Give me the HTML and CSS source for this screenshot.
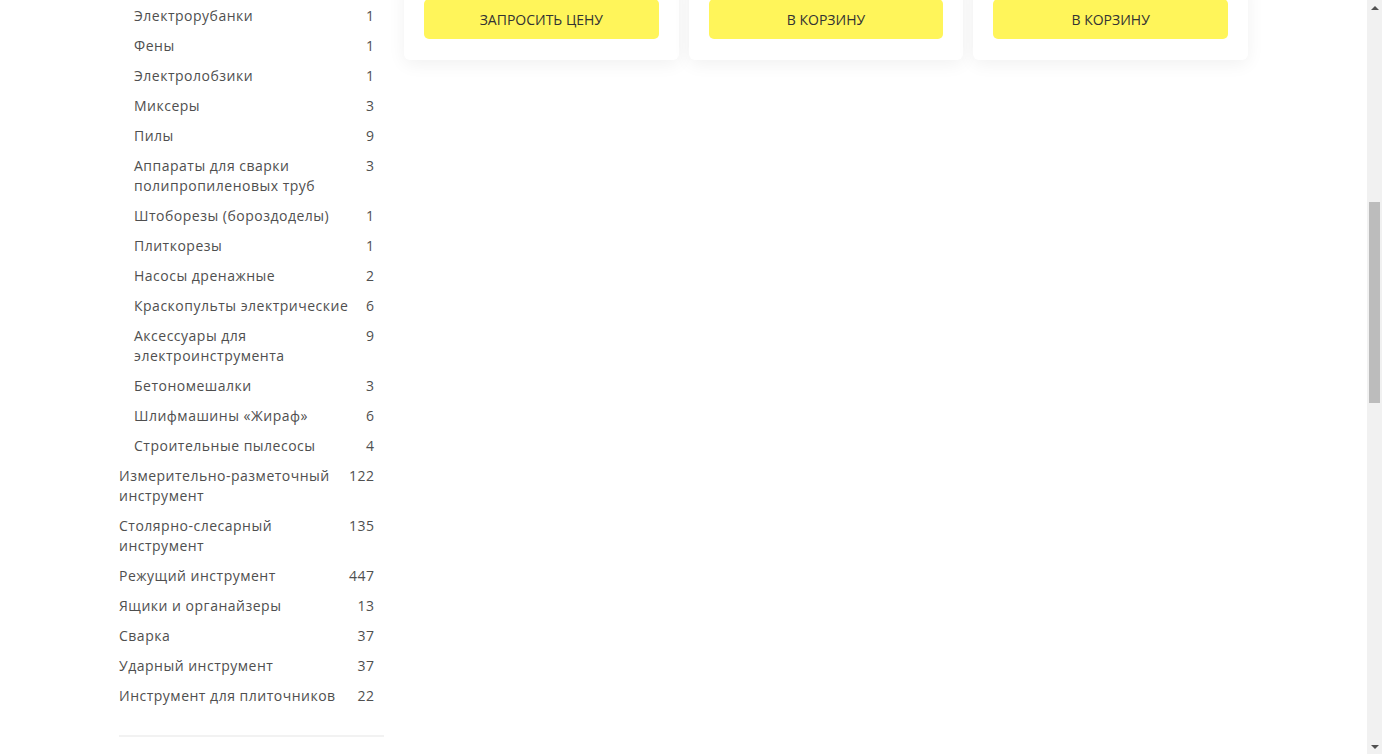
FILE: index.html
```html
<!DOCTYPE html>
<html lang="ru">
<head>
<meta charset="utf-8">
<title>Каталог</title>
<link rel="stylesheet" href="styles.css">
</head>
<body>
<div class="page">
  <div class="container">
    <aside class="sidebar">
      <ul class="cats">
        <li class="cat sub"><span class="name">Электрорубанки</span><span class="count">1</span></li>
        <li class="cat sub"><span class="name">Фены</span><span class="count">1</span></li>
        <li class="cat sub"><span class="name">Электролобзики</span><span class="count">1</span></li>
        <li class="cat sub"><span class="name">Миксеры</span><span class="count">3</span></li>
        <li class="cat sub"><span class="name">Пилы</span><span class="count">9</span></li>
        <li class="cat sub"><span class="name">Аппараты для сварки полипропиленовых труб</span><span class="count">3</span></li>
        <li class="cat sub"><span class="name">Штоборезы (бороздоделы)</span><span class="count">1</span></li>
        <li class="cat sub"><span class="name">Плиткорезы</span><span class="count">1</span></li>
        <li class="cat sub"><span class="name">Насосы дренажные</span><span class="count">2</span></li>
        <li class="cat sub"><span class="name">Краскопульты электрические</span><span class="count">6</span></li>
        <li class="cat sub"><span class="name">Аксессуары для электроинструмента</span><span class="count">9</span></li>
        <li class="cat sub"><span class="name">Бетономешалки</span><span class="count">3</span></li>
        <li class="cat sub"><span class="name">Шлифмашины «Жираф»</span><span class="count">6</span></li>
        <li class="cat sub"><span class="name">Строительные пылесосы</span><span class="count">4</span></li>
        <li class="cat"><span class="name">Измерительно-разметочный инструмент</span><span class="count">122</span></li>
        <li class="cat"><span class="name">Столярно-слесарный инструмент</span><span class="count">135</span></li>
        <li class="cat"><span class="name">Режущий инструмент</span><span class="count">447</span></li>
        <li class="cat"><span class="name">Ящики и органайзеры</span><span class="count">13</span></li>
        <li class="cat"><span class="name">Сварка</span><span class="count">37</span></li>
        <li class="cat"><span class="name">Ударный инструмент</span><span class="count">37</span></li>
        <li class="cat"><span class="name">Инструмент для плиточников</span><span class="count">22</span></li>
      </ul>
      <hr class="divider">
    </aside>
    <main class="products">
      <div class="card"><button class="btn">Запросить цену</button></div>
      <div class="card"><button class="btn">В корзину</button></div>
      <div class="card"><button class="btn">В корзину</button></div>
    </main>
  </div>
</div>
<div class="scrollbar">
  <div class="arrow up"></div>
  <div class="track"><div class="thumb"></div></div>
  <div class="arrow down"></div>
</div>
</body>
</html>
```

FILE: styles.css
```css
html, body {
  margin: 0;
  padding: 0;
  height: 100%;
  overflow: hidden;
}
body {
  display: flex;
  background: #fff;
  font-family: "Open Sans", "Liberation Sans", sans-serif;
  font-size: 14px;
  color: #4f4f4f;
}
.page {
  flex: 1;
  min-width: 0;
}
.container {
  width: 1129px;
  margin: 0 auto;
  display: flex;
  gap: 20px;
  align-items: flex-start;
}
.sidebar {
  width: 265px;
  flex: none;
  padding-top: 1px;
}
.cats {
  list-style: none;
  margin: 0;
  padding: 0 10px 0 0;
  letter-spacing: 0.5px;
}
.cat {
  display: flex;
  justify-content: space-between;
  gap: 12px;
  padding: 5px 0;
  line-height: 20px;
}
.cat.sub {
  padding-left: 15px;
}
.count {
  flex: none;
  text-align: right;
  margin-right: -0.5px;
}
.divider {
  border: 0;
  border-top: 2px solid #f2f2f2;
  margin: 24px 0 0;
}
.products {
  flex: 1;
  display: grid;
  grid-template-columns: repeat(3, 1fr);
  gap: 10px;
  margin-top: -21px;
}
.card {
  background: #fff;
  border-radius: 6px;
  padding: 20px 20px 21px;
  box-shadow: 0 4px 18px rgba(0, 0, 0, 0.06);
}
.btn {
  display: block;
  width: 100%;
  height: 40px;
  border: 0;
  border-radius: 5px;
  background: #fff55a;
  color: #333;
  font-family: "Open Sans", "Liberation Sans", sans-serif;
  font-size: 14px;
  text-transform: uppercase;
  cursor: pointer;
}
.scrollbar {
  width: 15px;
  flex: none;
  background: #f1f1f1;
  display: flex;
  flex-direction: column;
}
.arrow {
  height: 15px;
  flex: none;
  display: flex;
  align-items: center;
  justify-content: center;
}
.arrow::before {
  content: "";
  width: 0;
  height: 0;
  border-left: 4px solid transparent;
  border-right: 4px solid transparent;
}
.arrow.up::before {
  border-bottom: 4px solid #505050;
}
.arrow.down::before {
  border-top: 4px solid #505050;
}
.track {
  flex: 1;
  padding: 0 2px;
}
.thumb {
  margin-top: 187px;
  height: 201px;
  background: #bcbcbc;
}
```
